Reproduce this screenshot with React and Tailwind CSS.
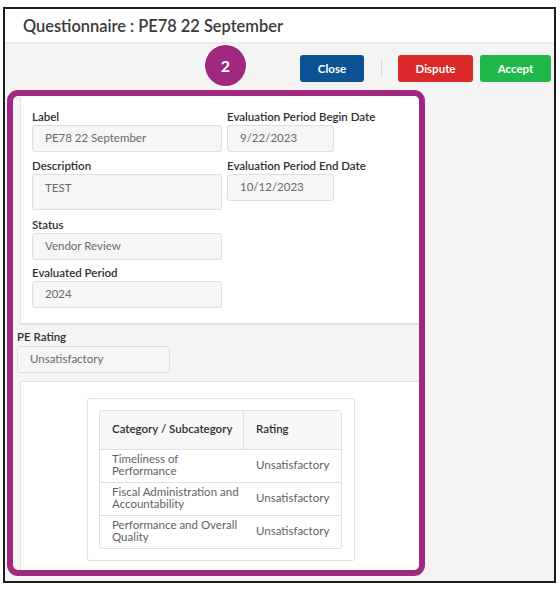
const font = { fontFamily: "Lato, 'Open Sans', sans-serif" };

function Field({ label, value, wide = true, tall = false, className = "" }) {
  return (
    <div className={className}>
      <div className="text-[11.5px] leading-[16px] font-semibold text-[#2f2f2f]">{label}</div>
      <div
        className={`rounded-[3px] border border-[#dedede] bg-[#f6f6f6] pl-[12px] text-[11.5px] text-[#6a6a6a] ${
          wide ? "w-[190px]" : "w-[107px]"
        } ${tall ? "h-[36px] pt-[4px] leading-[18px]" : "h-[27px] leading-[24px]"}`}
      >
        {value}
      </div>
    </div>
  );
}

const rows = [
  ["Timeliness of", "Performance"],
  ["Fiscal Administration and", "Accountability"],
  ["Performance and Overall", "Quality"],
];

export default function App() {
  return (
    <div style={font} className="h-[590px] w-[560px] overflow-hidden bg-white pl-[3px] pt-[7px]">
      <div className="h-[576px] w-[553px] border-2 border-[#1c1c1c] bg-[#f4f4f4]">
        {/* Header */}
        <div className="h-[35px] border-b-2 border-[#ececec] bg-white pl-[18px] text-[16.4px] leading-[33px] font-semibold text-[#3a3a3a]">
          Questionnaire : PE78 22 September
        </div>

        {/* Actions */}
        <div className="relative flex h-[46px] items-start pl-[295px] pt-[11px]">
          <div className="absolute left-[200px] top-[1px] flex h-[41px] w-[41px] items-center justify-center rounded-full bg-[#a0287f] text-[16px] font-bold text-white ring-1 ring-white">
            2
          </div>
          <button className="h-[27px] w-[64px] rounded-[3px] bg-[#0b5394] text-[11.5px] font-bold text-white">Close</button>
          <div className="ml-[17px] mt-[5px] h-[17px] w-px bg-[#d6d6d6]" />
          <button className="ml-[16px] h-[27px] w-[75px] rounded-[3px] bg-[#dc2a2c] text-[11.5px] font-bold text-white">Dispute</button>
          <button className="ml-[7px] h-[27px] w-[71px] rounded-[3px] bg-[#21b84b] text-[11.5px] font-bold text-white">Accept</button>
        </div>

        {/* Highlighted section */}
        <div className="ml-[2px] h-[486px] w-[418px] overflow-hidden rounded-[11px] border-[6px] border-[#a0287f]">
          <div className="ml-[7px] flex h-[229px] gap-[5px] rounded-tl-[3px] border-b-2 border-l border-[#e2e2e2] bg-white pl-[11px] pt-[13px]">
            <div className="flex w-[190px] flex-col">
              <Field label="Label" value="PE78 22 September" />
              <Field className="mt-[6px]" label="Description" value="TEST" tall />
              <Field className="mt-[7px]" label="Status" value="Vendor Review" />
              <Field className="mt-[5px]" label="Evaluated Period" value="2024" />
            </div>
            <div className="flex flex-col">
              <Field label="Evaluation Period Begin Date" value="9/22/2023" wide={false} />
              <Field className="mt-[6px]" label="Evaluation Period End Date" value="10/12/2023" wide={false} />
            </div>
          </div>

          <div className="pl-[4px] pt-[4px]">
            <Field label="PE Rating" value="Unsatisfactory" className="[&>div:last-child]:mt-px [&>div:last-child]:w-[153px] [&>div:last-child]:leading-[23px]" />
          </div>

          <div className="ml-[7px] mt-[8px] h-[190px] rounded-tl-[3px] border-l border-t border-[#e2e2e2] bg-white pl-[66px] pt-[16px]">
            <div className="h-[163px] w-[268px] rounded-[3px] border border-[#e2e2e2] p-[11px]">
              <table className="w-[243px] table-fixed border-separate border-spacing-0 rounded-[3px] border border-[#e0e0e0] text-[11.5px]">
                <thead>
                  <tr className="h-[39px] bg-[#f7f7f7] text-[#2f2f2f]">
                    <th className="w-[144px] border-b border-r border-[#e0e0e0] pb-[2px] pl-[12px] text-left font-semibold">Category / Subcategory</th>
                    <th className="border-b border-[#e0e0e0] pb-[2px] pl-[12px] text-left font-semibold">Rating</th>
                  </tr>
                </thead>
                <tbody className="text-[#5f5f5f]">
                  {rows.map((lines, i) => (
                    <tr key={lines[0]} className={i < 2 ? "h-[33px]" : "h-[32px]"}>
                      <td className={`pb-[2px] pl-[12px] leading-[12px] ${i < 2 ? "border-b border-[#e0e0e0]" : ""}`}>
                        {lines[0]}
                        <br />
                        {lines[1]}
                      </td>
                      <td className={`pb-[2px] pl-[12px] ${i < 2 ? "border-b border-[#e0e0e0]" : ""}`}>Unsatisfactory</td>
                    </tr>
                  ))}
                </tbody>
              </table>
            </div>
          </div>
        </div>
      </div>
    </div>
  );
}
